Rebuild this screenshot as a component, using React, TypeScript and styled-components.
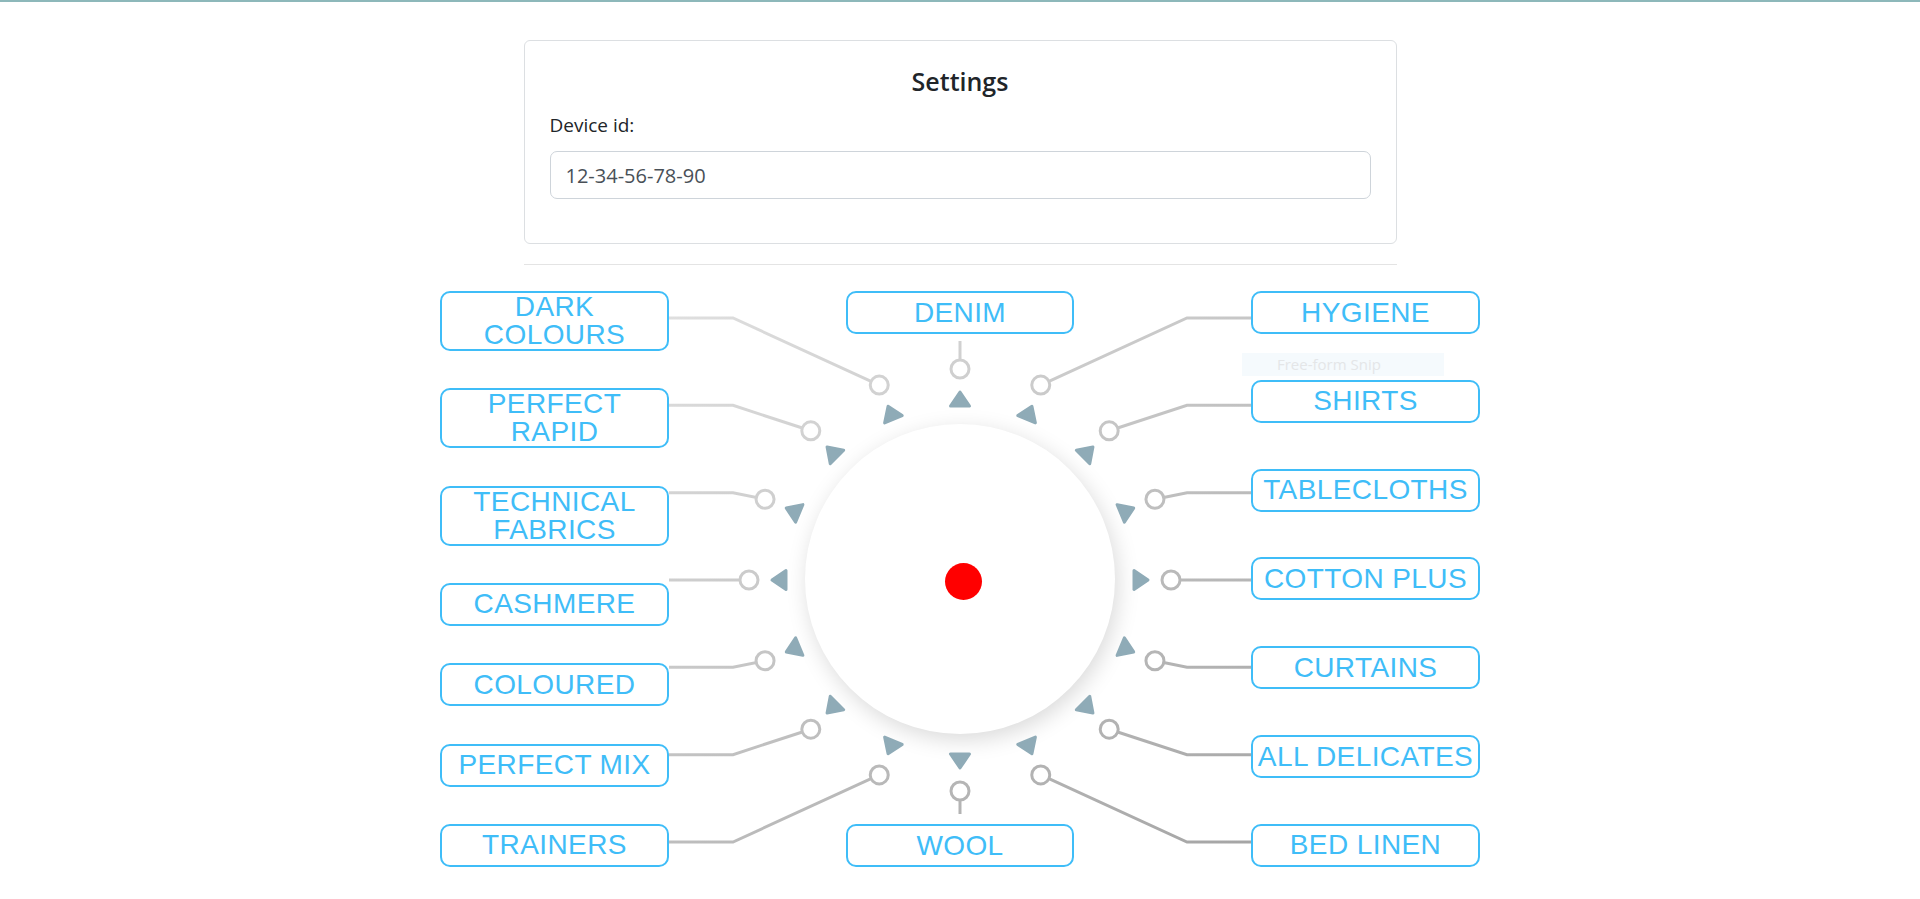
import React from "react";
import styled, { createGlobalStyle } from "styled-components";

const GlobalStyle = createGlobalStyle`
  html, body { margin: 0; padding: 0; background: #ffffff; }
  body { font-family: "Open Sans", "Noto Sans", sans-serif; color: #212529; }
  *, *::before, *::after { box-sizing: border-box; }
`;

const Page = styled.div`
  border-top: 2px solid #8db8ba;
  min-height: 899px;
  padding-top: 38px;
`;

const Card = styled.section`
  width: 873px;
  margin: 0 auto;
  border: 1px solid #dcdfe2;
  border-radius: 6px;
  padding: 25px;
`;

const Title = styled.h5`
  margin: 0 0 15px;
  font-size: 25px;
  line-height: 30px;
  font-weight: 600;
  text-align: center;
  color: #212529;
`;

const FieldLabel = styled.label`
  display: block;
  font-size: 19px;
  line-height: 28px;
  margin-bottom: 12px;
  color: #212529;
`;

const Input = styled.input`
  display: block;
  width: 100%;
  height: 48px;
  padding: 0 15px;
  margin: 0 0 19px;
  font-family: "Open Sans", "Noto Sans", sans-serif;
  font-size: 20px;
  color: #495057;
  background: #fff;
  border: 1px solid #ced4da;
  border-radius: 7px;
  outline: none;
`;

const Divider = styled.hr`
  width: 873px;
  margin: 20px auto 26px;
  border: 0;
  border-top: 1px solid #e4e4e4;
`;

const Dial = styled.div`
  position: relative;
  width: 1040px;
  height: 576px;
  margin: 0 auto;
  display: flex;
  justify-content: space-between;
`;

const Column = styled.div<{ $w: number }>`
  width: ${(p) => p.$w}px;
  display: flex;
  flex-direction: column;
  justify-content: space-between;
  align-items: center;
`;

const Label = styled.div<{ $w: number }>`
  width: ${(p) => p.$w}px;
  min-height: 43px;
  flex-shrink: 0;
  border: 2px solid #3fbdf8;
  border-radius: 10px;
  background: #fff;
  display: flex;
  align-items: center;
  justify-content: center;
  text-align: center;
  font-family: "Liberation Sans", Arial, sans-serif;
  font-size: 28px;
  line-height: 28px;
  letter-spacing: 0.4px;
  color: #3fbdf8;
  white-space: nowrap;
`;

const Knob = styled.div`
  width: 310px;
  height: 310px;
  flex-shrink: 0;
  border-radius: 50%;
  background: #ffffff;
  box-shadow: 3px 6px 22px rgba(0, 0, 0, 0.15);
  display: flex;
  align-items: center;
  justify-content: center;
`;

const Dot = styled.div`
  width: 37px;
  height: 37px;
  border-radius: 50%;
  background: #ff0000;
  transform: translate(3px, 2px);
`;

const Wires = styled.svg`
  position: absolute;
  left: 0;
  top: 0;
  width: 1040px;
  height: 576px;
  overflow: visible;
  pointer-events: none;
`;

const SnipHint = styled.div`
  position: absolute;
  left: 802px;
  top: 62px;
  width: 202px;
  height: 23px;
  padding-left: 35px;
  background: #f5fafd;
  font-family: "Open Sans", "Noto Sans", sans-serif;
  font-size: 15px;
  line-height: 23px;
  color: #e4e6e8;
  white-space: nowrap;
  pointer-events: none;
`;

const CX = 520;
const CY = 289;
const RC = 211;
const STEP = 87.33;

const leftLabels: string[][] = [
  ["DARK", "COLOURS"],
  ["PERFECT", "RAPID"],
  ["TECHNICAL", "FABRICS"],
  ["CASHMERE"],
  ["COLOURED"],
  ["PERFECT MIX"],
  ["TRAINERS"],
];

const rightLabels: string[][] = [
  ["HYGIENE"],
  ["SHIRTS"],
  ["TABLECLOTHS"],
  ["COTTON PLUS"],
  ["CURTAINS"],
  ["ALL DELICATES"],
  ["BED LINEN"],
];

const pt = (deg: number, r: number): [number, number] => {
  const a = (deg * Math.PI) / 180;
  return [CX + r * Math.cos(a), CY - r * Math.sin(a)];
};

const triangle = (deg: number) => {
  const a = (deg * Math.PI) / 180;
  const [tx, ty] = pt(deg, 188);
  const [bx, by] = pt(deg, 174);
  const vx = Math.sin(a) * 9.5;
  const vy = Math.cos(a) * 9.5;
  return `M${tx.toFixed(2)} ${ty.toFixed(2)} L${(bx + vx).toFixed(2)} ${(by + vy).toFixed(2)} L${(bx - vx).toFixed(2)} ${(by - vy).toFixed(2)} Z`;
};

const renderText = (lines: string[]) =>
  lines.map((l, i) => (
    <React.Fragment key={i}>
      {i > 0 && <br />}
      {l}
    </React.Fragment>
  ));

const WireDrawing: React.FC = () => {
  const wires: { pts: [number, number][]; c: [number, number] }[] = [];
  for (let i = 0; i < 7; i++) {
    const ly = CY - STEP * (3 - i);
    const cl = pt(112.5 + 22.5 * i, RC);
    wires.push({ pts: [[229, ly], [293, ly], cl], c: cl });
    const cr = pt(67.5 - 22.5 * i, RC);
    wires.push({ pts: [[811, ly], [747, ly], cr], c: cr });
  }
  const top = pt(90, RC);
  wires.push({ pts: [[CX, 50], top], c: top });
  const bottom = pt(-90, RC);
  wires.push({ pts: [[CX, 523], bottom], c: bottom });

  const angles = Array.from({ length: 16 }, (_, i) => i * 22.5);

  return (
    <Wires viewBox="0 0 1040 576">
      <defs>
        <linearGradient id="wire" gradientUnits="userSpaceOnUse" x1="220" y1="-83" x2="732" y2="688">
          <stop offset="0" stopColor="#e6e6e6" />
          <stop offset="1" stopColor="#a0a0a0" />
        </linearGradient>
      </defs>
      {wires.map((w, i) => (
        <polyline
          key={`l${i}`}
          points={w.pts.map((p) => `${p[0].toFixed(2)},${p[1].toFixed(2)}`).join(" ")}
          fill="none"
          stroke="url(#wire)"
          strokeWidth={3}
        />
      ))}
      {wires.map((w, i) => (
        <circle key={`c${i}`} cx={w.c[0]} cy={w.c[1]} r={9} fill="#fff" stroke="url(#wire)" strokeWidth={3} />
      ))}
      {angles.map((a) => (
        <path key={`t${a}`} d={triangle(a)} fill="#8fabb7" stroke="#8fabb7" strokeWidth={3} strokeLinejoin="round" />
      ))}
    </Wires>
  );
};

export default function App() {
  return (
    <Page>
      <GlobalStyle />
      <Card>
        <Title>Settings</Title>
        <FieldLabel htmlFor="device">Device id:</FieldLabel>
        <Input id="device" defaultValue="12-34-56-78-90" />
      </Card>
      <Divider />
      <Dial>
        <Column $w={229}>
          {leftLabels.map((l) => (
            <Label key={l.join(" ")} $w={229}>
              <span>{renderText(l)}</span>
            </Label>
          ))}
        </Column>
        <Column $w={228}>
          <Label $w={228}>DENIM</Label>
          <Knob>
            <Dot />
          </Knob>
          <Label $w={228}>WOOL</Label>
        </Column>
        <Column $w={229}>
          {rightLabels.map((l) => (
            <Label key={l.join(" ")} $w={229}>
              <span>{renderText(l)}</span>
            </Label>
          ))}
        </Column>
        <WireDrawing />
        <SnipHint>Free-form Snip</SnipHint>
      </Dial>
    </Page>
  );
}
